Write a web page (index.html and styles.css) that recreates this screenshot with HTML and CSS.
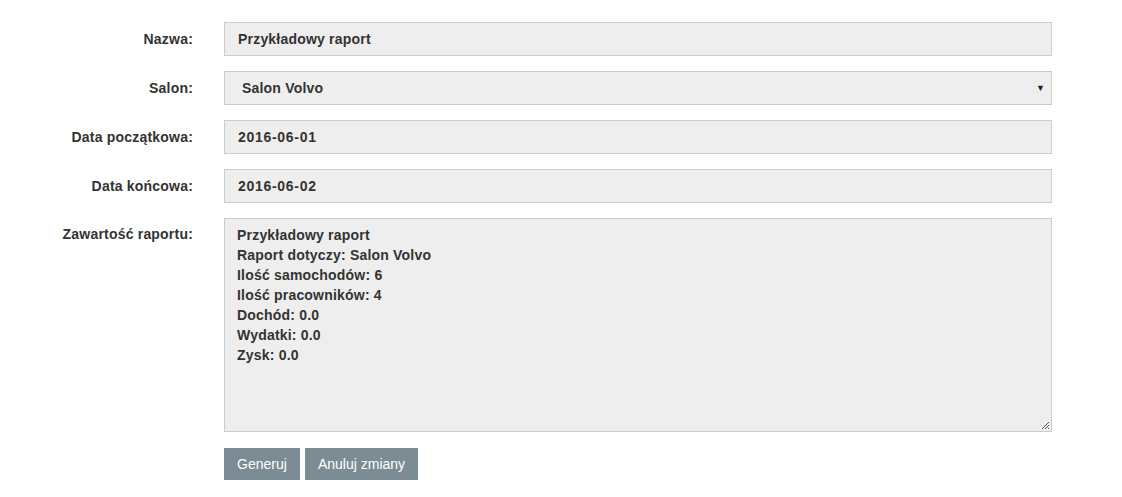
FILE: index.html
```html
<!DOCTYPE html>
<html lang="pl">
<head>
<meta charset="utf-8">
<title>Raport</title>
<link rel="stylesheet" href="styles.css">
</head>
<body>
<form class="form">
  <label class="label">Nazwa:</label>
  <div class="field">Przykładowy raport</div>

  <label class="label">Salon:</label>
  <div class="field select"><span>Salon Volvo</span><span class="arrow">▼</span></div>

  <label class="label">Data początkowa:</label>
  <div class="field date">2016-06-01</div>

  <label class="label">Data końcowa:</label>
  <div class="field date">2016-06-02</div>

  <label class="label label-top">Zawartość raportu:</label>
  <div class="field area">
    <div>Przykładowy raport</div>
    <div>Raport dotyczy: Salon Volvo</div>
    <div>Ilość samochodów: 6</div>
    <div>Ilość pracowników: 4</div>
    <div>Dochód: 0.0</div>
    <div>Wydatki: 0.0</div>
    <div>Zysk: 0.0</div>
    <svg class="grip" width="9" height="9" viewBox="0 0 9 9"><path d="M8 1L1 8M8 4L4 8M8 7L7 8" stroke="#555" stroke-width="1" fill="none"/></svg>
  </div>

  <div></div>
  <div class="buttons">
    <button type="button" class="btn btn-gen">Generuj</button>
    <button type="button" class="btn btn-cancel">Anuluj zmiany</button>
  </div>
</form>
</body>
</html>
```

FILE: styles.css
```css
html, body {
  margin: 0;
  padding: 0;
  background: #fff;
}
body {
  font-family: "Liberation Sans", Arial, sans-serif;
  color: #333;
}
.form {
  display: grid;
  grid-template-columns: 193px 828px;
  column-gap: 31px;
  row-gap: 15px;
  padding-top: 22px;
}
.label {
  font-size: 14px;
  font-weight: bold;
  letter-spacing: 0.2px;
  color: #333;
  text-align: right;
  display: flex;
  align-items: center;
  justify-content: flex-end;
}
.label-top {
  align-items: flex-start;
  padding-top: 8px;
}
.field {
  box-sizing: border-box;
  height: 34px;
  background: #eee;
  border: 1px solid #ccc;
  padding: 0 13px;
  font-size: 14px;
  font-weight: bold;
  letter-spacing: 0.2px;
  color: #333;
  display: flex;
  align-items: center;
}
.select {
  padding-left: 17px;
  padding-right: 6px;
  justify-content: space-between;
}
.arrow {
  font-size: 9px;
  color: #222;
}
.date {
  letter-spacing: 0.7px;
}
.area {
  position: relative;
  height: 214px;
  display: block;
  padding: 6px 12px;
  line-height: 20px;
}
.grip {
  position: absolute;
  right: 1px;
  bottom: 1px;
}
.buttons {
  display: flex;
  gap: 5px;
  padding-top: 1px;
}
.btn {
  height: 32px;
  border: none;
  background: #7b8c94;
  color: #fff;
  font-family: "Liberation Sans", Arial, sans-serif;
  font-size: 14px;
  padding: 0;
  white-space: nowrap;
  cursor: pointer;
}
.btn-gen { width: 76px; }
.btn-cancel { width: 113px; }
```
